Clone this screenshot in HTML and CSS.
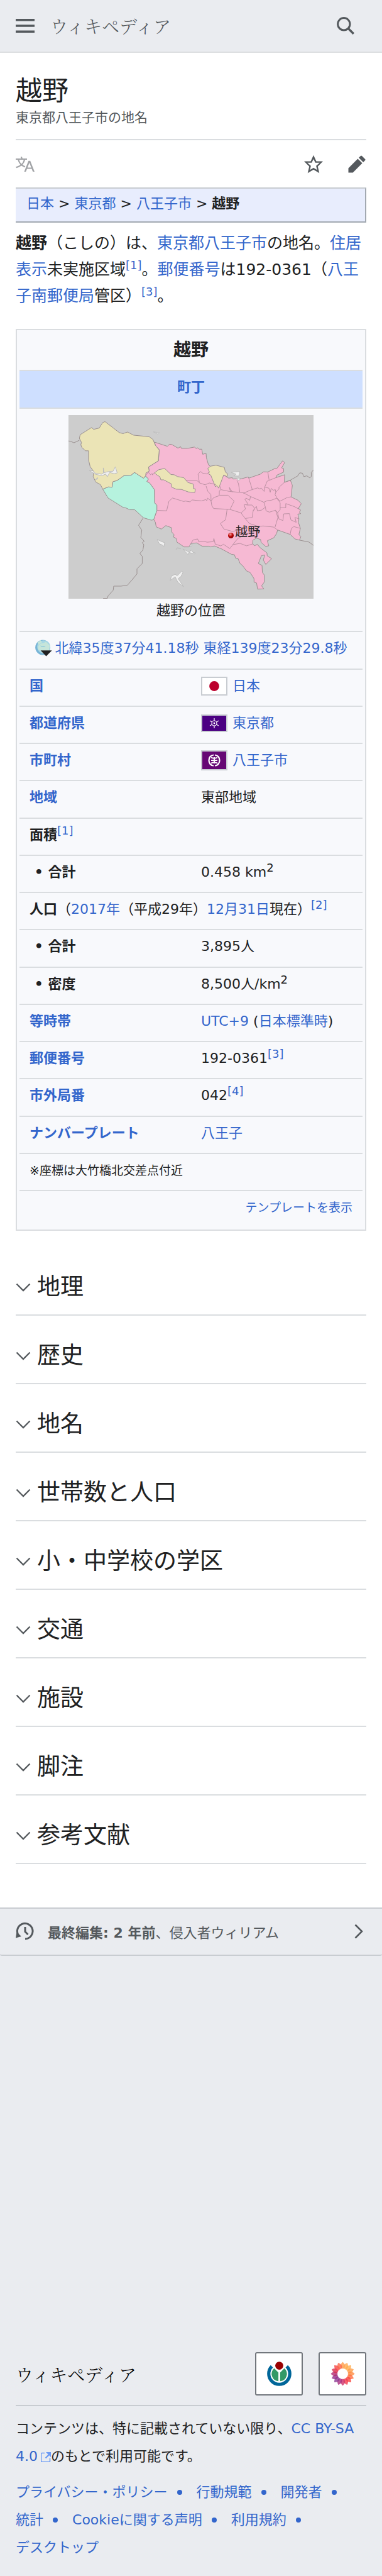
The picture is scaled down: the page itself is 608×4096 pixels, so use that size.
FILE: index.html
```
<!DOCTYPE html>
<html lang="ja">
<head>
<meta charset="utf-8">
<meta name="viewport" content="width=device-width, initial-scale=1">
<title>越野 - ウィキペディア</title>
<link rel="stylesheet" href="styles.css">
</head>
<body>
<svg class="defs" aria-hidden="true">
  <symbol id="chevron" viewBox="0 0 24 24"><path d="M1.500 6.500 12 17 22.500 6.500" fill="none" stroke="currentColor" stroke-width="2.300"/></symbol>
</svg>

<header class="site-header">
  <button class="icon-button" type="button" aria-label="メニュー">
    <svg class="icon" viewBox="0 0 30 30"><path d="M0 4h30v3.500H0zM0 13.300h30v3.500H0zM0 22.500h30V26H0z" fill="currentColor"/></svg>
  </button>
  <a class="wordmark" href="#">ウィキペディア</a>
  <button class="icon-button search" type="button" aria-label="検索">
    <svg class="icon" viewBox="0 0 30 30"><g fill="none" stroke="currentColor"><circle cx="12.300" cy="12.300" r="9.700" stroke-width="3"/><path d="m19 19 8.800 8.800" stroke-width="3.400"/></g></svg>
  </button>
</header>

<main class="page">
  <div class="heading">
    <h1 class="title">越野</h1>
    <p class="subtitle">東京都八王子市の地名</p>
  </div>

  <div class="toolbar">
    <button class="icon-button muted" type="button" aria-label="言語">
      <svg class="icon" viewBox="0 0 20 20"><path d="M20 18h-1.440a.6.600 0 0 1-.4-.120.800.800 0 0 1-.230-.310L17 15h-5l-1 2.540a.8.800 0 0 1-.220.300.600.600 0 0 1-.4.140H9l4.550-11.470h1.890zm-3.530-4.310L14.890 9.500a11.600 11.600 0 0 1-.390-1.240q-.090.370-.190.690l-.190.560-1.580 4.190zm-6.300-1.580a13.400 13.400 0 0 1-2.910-1.410 11.460 11.460 0 0 0 2.810-5.370H12V4H7.310a4 4 0 0 0-.2-.560C6.870 2.790 6.600 2 6.600 2l-1.470.5s.4.890.6 1.500H0v1.330h2.150A11.230 11.230 0 0 0 5 10.700a17.200 17.200 0 0 1-5 2.100q.560.820.870 1.380a23.300 23.300 0 0 0 5.220-2.510 15.600 15.600 0 0 0 3.560 1.770zM3.630 5.330h4.910a8.100 8.100 0 0 1-2.450 4.450 9.100 9.100 0 0 1-2.460-4.450" fill="currentColor"/></svg>
    </button>
    <span class="toolbar-end">
      <button class="icon-button" type="button" aria-label="ウォッチ">
        <svg class="icon" viewBox="0 0 20 20"><path d="M20 7h-7L10 .5 7 7H0l5.460 5.470-1.640 7 6.180-3.700 6.180 3.730-1.630-7zm-10 6.900-3.760 2.270 1-4.280L3.500 8.500h4.610L10 4.600l1.900 3.900h4.600l-3.730 3.400 1 4.280z" fill="currentColor"/></svg>
      </button>
      <button class="icon-button" type="button" aria-label="編集">
        <svg class="icon" viewBox="0 0 20 20"><path d="m16.770 8 1.940-2a1 1 0 0 0 0-1.410l-3.340-3.300a1 1 0 0 0-1.410 0L12 3.230zM1 14.250V19h4.750l9.960-9.960-4.750-4.750z" fill="currentColor"/></svg>
      </button>
    </span>
  </div>

  <nav class="breadcrumb"><a href="#">日本</a> &gt; <a href="#">東京都</a> &gt; <a href="#">八王子市</a> &gt; <b>越野</b></nav>

  <p class="lead"><b>越野</b>（こしの）は、<a href="#">東京都</a><a href="#">八王子市</a>の地名。<a href="#">住居表示</a>未実施区域<sup><a href="#">[1]</a></sup>。<a href="#">郵便番号</a>は192-0361（<a href="#">八王子南郵便局</a>管区）<sup><a href="#">[3]</a></sup>。</p>

  <div class="infobox">
    <table class="facts">
      <tbody>
        <tr><th class="facts-title" colspan="2">越野</th></tr>
        <tr><th class="facts-kind" colspan="2"><a href="#">町丁</a></th></tr>
        <tr><td class="facts-map" colspan="2">
          <div class="map">
            <svg class="map-art" viewBox="20 24 1528 1517" preserveAspectRatio="none" role="img" aria-label="越野の位置">
              <rect x="20" y="24" width="1528" height="1517" fill="#cdcdcd"/>
              <g class="river">
                <path d="M20 238 32 240 54 253 88 232M487 872 457 934 477 975 471 1035 493 1067 480 1078 490 1095 484 1139 465 1167 480 1191V1250L447 1295V1337L388 1429 348 1437H302L299 1470 267 1518 262 1539H236"/>
                <path d="M1366 580 1402 563 1450 526 1462 501 1479 504 1487 532 1507 526 1524 542 1534 532V498L1548 477M1460 1057 1520 1073 1548 1101"/>
              </g>
              <path class="pink" d="M557 248 637 282 650 265 664 267 703 297 719 285 724 299H763L806 288 815 300 826 295 836 306H851L857 348 878 340 880 376 893 435 906 449 990 520 1019 545 1042 541 1046 552 1099 550 1141 535 1144 545 1216 512 1236 493 1263 494 1308 465 1320 464 1355 402 1368 417 1349 460 1362 466V495L1320 520 1313 541 1368 517 1366 580 1404 563 1416 604 1408 700 1450 727 1472 756 1454 794 1467 808 1460 827 1469 838 1450 842 1457 881 1454 910 1466 960 1457 1010 1469 1030 1460 1057 1432 1047 1402 1010 1324 973 1318 1002 1300 1038 1260 1062 1269 1104 1250 1109 1221 1075 1218 1052 1192 1040 1170 1058 1168 1085 1180 1104 1198 1091 1213 1117 1258 1163 1259 1186 1287 1210 1250 1258 1235 1221 1244 1180 1223 1186 1204 1250 1227 1266 1229 1324 1241 1345V1404L1224 1434 1238 1460 1199 1462 1193 1411 1177 1404V1375L1153 1325 1129 1310 1105 1266 1091 1252 1076 1206H1062L1055 1178 1036 1174 972 1128 929 1105 908 1113 896 1107H853L820 1080 784 1084 771 1113H741L697 1074 693 1045 674 1030 679 1014 664 990 662 954 627 937 599 966 567 947 562 910 551 886 571 812V767L557 750 556 640 527 587 508 576 517 553 501 527 503 501 523 487 519 453 581 402 586 310 562 274Z"/>
              <path class="cream" d="M88 216 93 186 164 127 177 142 212 131 233 86 248 78 337 169 360 177 388 164 426 190 524 203 547 226 562 274 586 312 580 402 519 453 523 487 503 503 501 525 488 546 431 498 411 521 368 523 323 565 297 575 292 620 269 618 234 636 219 598 190 577 174 532 177 490 155 449 145 393V319H126L103 290 97 269 101 250Z"/>
              <path class="cream" d="M555 503 583 475 620 465 659 515 679 517 700 532 739 541 765 581 797 593 799 631 811 634 808 663 767 659 725 638 691 636 662 618V593L614 559H596L590 534Z"/>
              <path class="cream" d="M888 466 906 446 940 438 992 456 998 494 1014 511 1008 532 988 518 962 610 957 628 945 607 936 616 907 520 895 512 898 490Z"/>
              <path class="mint" d="M234 636 269 618 292 620 297 575 323 565 368 523 411 521 431 498 488 546 501 529 519 553 508 572 527 587 556 640 557 750 571 767V812L551 889 536 892 487 872 433 806H402L380 792 360 786 266 708Z"/>
              <g class="border">
                <path d="M503 515 514 508 519 497 532 517 540 507 545 519 550 502M753 563H820L838 585 872 600 898 585 940 598M836 582 828 512 843 490 858 505 885 511 893 497M878 610 889 655 908 680 909 734 914 772 925 796 1026 803 1096 832 1122 879 1149 920 1204 944 1234 940 1298 949 1310 960 1324 973M571 811 632 815 646 737 669 709 739 738 749 734 778 741 791 725 849 733 877 722 882 731 888 710 909 734 925 706 960 690 961 650 970 640 962 604"/>
                <path d="M970 640 1025 655 1110 665 1155 697 1238 744 1260 731 1284 728 1320 710 1340 735 1385 704 1408 700M1030 655 1023 622 1042 660M1070 564 1080 590 1088 658M1144 545 1167 643M1110 670 1153 645 1200 625 1213 634 1222 627 1240 655 1242 618 1270 628 1278 662 1284 630 1297 645 1310 640 1313 662 1308 680 1328 728M1366 580 1332 622 1333 634 1313 662M1244 618 1259 570 1313 541M1271 560 1263 494M962 686H1014L1053 734 1028 802M1009 803 1000 888 967 920 990 966 1045 986 1096 965M1155 697 1150 728 1128 710 1120 720 1140 760 1115 766 1124 800 1096 832M1130 767H1165L1182 796 1171 820 1166 870 1122 878M1170 815 1192 778 1198 815 1224 809 1248 785 1238 744M1248 785 1252 815 1273 826 1311 810 1324 830 1340 805V750L1325 720M1340 790 1375 790V755L1430 781 1467 808M1311 810 1326 870 1308 950M1324 830 1333 883 1357 895 1362 840 1398 838 1407 890 1440 910 1432 870 1457 881M1402 1010 1410 960 1425 945 1466 960"/>
                <path d="M784 1084 797 1056 825 1047 832 1070 865 1067 884 1074 922 1070 927 1043 935 1090 970 1105 986 1091 1026 1127 1045 1094 1075 1045 1130 1005M1045 1094 1090 1084 1130 1104 1170 1088"/>
              </g>
              <g class="lake">
                <path d="M150 482 172 484 188 505 226 512 238 503 237 460 242 500 270 490 298 488 312 451 324 502 304 508 277 498 262 534 252 511 229 525 189 513Z"/>
                <path d="M550 163 587 170 577 181ZM1034 497 1089 490 1082 528 1050 526 1065 512ZM1068 550 1085 542 1090 558 1078 562ZM573 1051 600 1069 620 1078 615 1110 603 1096 587 1088ZM690 1135 698 1120 720 1126 700 1124ZM733 1130 774 1157 785 1139 795 1157 811 1163 808 1171 771 1159 765 1176ZM654 1390 662 1355 685 1338 698 1352 725 1315 735 1320 721 1358 704 1375 738 1443 702 1405 685 1360ZM777 1101 792 1094 784 1110ZM188 558 200 540 203 550Z"/>
              </g>
            </svg>
            <span class="map-pin"></span>
            <a class="map-label" href="#">越野</a>
          </div>
          <div class="map-caption">越野の位置</div>
        </td></tr>
        <tr><td class="coords" colspan="2"><svg class="globe" viewBox="0 0 156 156" aria-hidden="true"><circle cx="70" cy="72" r="69" fill="#78b5d7"/><circle cx="78" cy="67" r="60" fill="#a7d7e5"/><path d="M28 60C40 38 60 30 76 32l24-12 35 35-8 50-58 22-18-24-24-10zM20 28l30-22 12 18-30 22z" fill="#c6e5da"/><path d="m46 57 38 3 12 10-40-6z" fill="#83c3dc"/><path d="M50 99h104l-53 54z" fill="#202122"/></svg><a href="#">北緯35度37分41.18秒 東経139度23分29.8秒</a></td></tr>
        <tr><th scope="row"><a href="#">国</a></th><td><span class="with-flag"><svg class="flag" viewBox="0 0 38 26"><path fill="#fff" d="M0 0h38v26H0z"/><circle cx="19" cy="13" r="7.900" fill="#bc002d"/></svg><a href="#">日本</a></span></td></tr>
        <tr><th scope="row"><a href="#">都道府県</a></th><td><span class="with-flag"><svg class="flag" viewBox="0 0 38 24"><path fill="#4b0082" d="M0 0h38v24H0z"/><g fill="none" stroke="#fff" stroke-width="1.200"><circle cx="19" cy="12" r="4"/><path d="M19 4v4M19 16v4M12 8l3.500 2M22.500 14l3.500 2M12 16l3.500-2M22.500 10l3.500-2"/></g><circle cx="19" cy="12" r="1.400" fill="#fff"/></svg><a href="#">東京都</a></span></td></tr>
        <tr><th scope="row"><a href="#">市町村</a></th><td><span class="with-flag"><svg class="flag" viewBox="0 0 38 28"><path fill="#660874" d="M0 0h38v28H0z"/><g fill="none" stroke="#fff" stroke-width="2.200"><path d="M18 5.500C8 6 8 22 18 22.500M20 5.500C30 6 30 22 20 22.500"/><path d="M14 14h10M19 9v10M14 9.500c3 1.500 7 1.500 10 0M14 18.500c3-1.500 7-1.500 10 0" stroke-width="1.900"/></g></svg><a href="#">八王子市</a></span></td></tr>
        <tr><th scope="row"><a href="#">地域</a></th><td>東部地域</td></tr>
        <tr><th scope="row" colspan="2">面積<sup><a href="#">[1]</a></sup></th></tr>
        <tr><th scope="row">&nbsp;•&nbsp;合計</th><td>0.458 km<sup>2</sup></td></tr>
        <tr><td colspan="2"><b>人口</b>（<a href="#">2017年</a>（平成29年）<a href="#">12月31日</a>現在）<sup><a href="#">[2]</a></sup></td></tr>
        <tr><th scope="row">&nbsp;•&nbsp;合計</th><td>3,895人</td></tr>
        <tr><th scope="row">&nbsp;•&nbsp;密度</th><td>8,500人/km<sup>2</sup></td></tr>
        <tr><th scope="row"><a href="#">等時帯</a></th><td><a href="#">UTC+9</a> (<a href="#">日本標準時</a>)</td></tr>
        <tr><th scope="row"><a href="#">郵便番号</a></th><td>192-0361<sup><a href="#">[3]</a></sup></td></tr>
        <tr><th scope="row"><a href="#">市外局番</a></th><td>042<sup><a href="#">[4]</a></sup></td></tr>
        <tr><th scope="row"><a href="#">ナンバープレート</a></th><td><a href="#">八王子</a></td></tr>
        <tr><td class="small" colspan="2">※座標は大竹橋北交差点付近</td></tr>
        <tr><td class="small end" colspan="2"><a href="#">テンプレートを表示</a></td></tr>
      </tbody>
    </table>
  </div>

  <div class="sections">
    <h2 class="section"><button class="section-toggle" type="button"><svg class="chevron"><use href="#chevron"/></svg>地理</button></h2>
    <h2 class="section"><button class="section-toggle" type="button"><svg class="chevron"><use href="#chevron"/></svg>歴史</button></h2>
    <h2 class="section"><button class="section-toggle" type="button"><svg class="chevron"><use href="#chevron"/></svg>地名</button></h2>
    <h2 class="section"><button class="section-toggle" type="button"><svg class="chevron"><use href="#chevron"/></svg>世帯数と人口</button></h2>
    <h2 class="section"><button class="section-toggle" type="button"><svg class="chevron"><use href="#chevron"/></svg>小・中学校の学区</button></h2>
    <h2 class="section"><button class="section-toggle" type="button"><svg class="chevron"><use href="#chevron"/></svg>交通</button></h2>
    <h2 class="section"><button class="section-toggle" type="button"><svg class="chevron"><use href="#chevron"/></svg>施設</button></h2>
    <h2 class="section"><button class="section-toggle" type="button"><svg class="chevron"><use href="#chevron"/></svg>脚注</button></h2>
    <h2 class="section"><button class="section-toggle" type="button"><svg class="chevron"><use href="#chevron"/></svg>参考文献</button></h2>
  </div>
</main>

<footer>
  <a class="last-modified" href="#">
    <svg class="icon" viewBox="0 0 30 30" aria-hidden="true"><g fill="none" stroke="currentColor" stroke-width="3"><path d="M4.500 21.500A12.300 12.300 0 1 1 15 27"/><path d="M15 8v7.500l4.500 4.500"/></g><path d="M0 25.500 1.500 16l7.500 7z" fill="currentColor"/></svg>
    <span class="last-modified-text"><b>最終編集: 2 年前</b>、侵入者ウィリアム</span>
    <svg class="arrow" viewBox="0 0 24 24" aria-hidden="true"><path d="m6.500 1.500 10.500 10.500L6.500 22.500" fill="none" stroke="currentColor" stroke-width="2.600"/></svg>
  </a>

  <div class="footer-content">
    <div class="footer-brand">
      <span class="wordmark footer-wordmark">ウィキペディア</span>
      <a class="badge" href="#" aria-label="Wikimedia Foundation">
        <svg class="badge-art" viewBox="0 0 226 226"><path d="M44.400 44.400A97 97 0 1 0 181.600 44.400" fill="none" stroke="#069" stroke-width="30"/><path d="m66 62 39 39v80A68 68 0 0 1 66 62zM160 62l-39 39v80a68 68 0 0 0 39-119z" fill="#396"/><circle cx="113" cy="38" r="37" fill="#900"/></svg>
      </a>
      <a class="badge" href="#" aria-label="MediaWiki">
        <svg class="badge-art" viewBox="-113 -113 226 226">
          <defs><path id="petal" d="M0-110C-28-84-26-60-8-48H8C26-60 28-84 0-110z"/></defs>
          <g fill-opacity=".8">
            <use href="#petal" fill="#ff9b4a"/>
            <use href="#petal" fill="#ffa94d" transform="rotate(22.500)"/>
            <use href="#petal" fill="#ffae4d" transform="rotate(45)"/>
            <use href="#petal" fill="#ff9d4a" transform="rotate(67.500)"/>
            <use href="#petal" fill="#ff8c42" transform="rotate(90)"/>
            <use href="#petal" fill="#ff6e40" transform="rotate(112.500)"/>
            <use href="#petal" fill="#f9453f" transform="rotate(135)"/>
            <use href="#petal" fill="#f43b4c" transform="rotate(157.500)"/>
            <use href="#petal" fill="#d0336a" transform="rotate(180)"/>
            <use href="#petal" fill="#a92e7e" transform="rotate(202.500)"/>
            <use href="#petal" fill="#8c3a93" transform="rotate(225)"/>
            <use href="#petal" fill="#932e88" transform="rotate(247.500)"/>
            <use href="#petal" fill="#b22a70" transform="rotate(270)"/>
            <use href="#petal" fill="#d9304f" transform="rotate(292.500)"/>
            <use href="#petal" fill="#f64545" transform="rotate(315)"/>
            <use href="#petal" fill="#fb6747" transform="rotate(337.500)"/>
          </g>
        </svg>
      </a>
    </div>
    <p class="license">コンテンツは、特に記載されていない限り、<a href="#">CC BY-SA 4.0<svg class="external" viewBox="0 0 16 16" aria-hidden="true"><path d="M6 1.500H1.500a1 1 0 0 0-1 1v12a1 1 0 0 0 1 1h12a1 1 0 0 0 1-1V9.500" fill="none" stroke="#6d9bf5" stroke-width="1.600"/><path d="M8 0h8v8l-2.700-2.700-5 5-1.600-1.600 5-5z" fill="#6d9bf5"/></svg></a>のもとで利用可能です。</p>
    <ul class="places">
      <li><a href="#">プライバシー・ポリシー</a></li>
      <li><a href="#">行動規範</a></li>
      <li><a href="#">開発者</a></li>
      <li><a href="#">統計</a></li>
      <li><a href="#">Cookieに関する声明</a></li>
      <li><a href="#">利用規約</a></li>
      <li><a href="#">デスクトップ</a></li>
    </ul>
  </div>
</footer>
</body>
</html>
```

FILE: styles.css
```
* {
  box-sizing: border-box;
}

body {
  margin: 0;
  background: #eaecf0;
  color: #202122;
  font-family: "DejaVu Sans", "Noto Sans CJK JP", sans-serif;
  font-size: 22px;
}

a {
  color: #3366cc;
  text-decoration: none;
}

button {
  font: inherit;
  color: inherit;
  padding: 0;
  border: 0;
  background: none;
}

h1,
h2,
p,
ul {
  margin: 0;
  padding: 0;
  font-weight: 400;
}

sup {
  font-size: 18px;
  font-weight: 400;
  line-height: 0;
}

.defs {
  display: none;
}

.icon-button {
  display: flex;
  color: #54595d;
}

.icon-button.muted {
  color: #a2a4a7;
}

.icon {
  width: 30px;
  height: 30px;
  flex: none;
}

.site-header {
  display: flex;
  align-items: center;
  height: 84px;
  padding: 0 43px 0 25px;
  border-bottom: 2px solid #dddfe1;
}

.wordmark {
  margin-left: 25px;
  color: #54595d;
  font-family: "Noto Serif CJK JP", "Noto Sans CJK JP", serif;
  font-size: 28px;
  font-weight: 300;
  line-height: 40px;
  white-space: nowrap;
}

.search {
  margin-left: auto;
}

.page {
  padding: 35px 25px 69px;
  background: #fff;
}

.heading {
  padding-bottom: 19px;
  border-bottom: 2px solid #dadde0;
}

.title {
  font-size: 42px;
  line-height: 52px;
}

.subtitle {
  margin-top: 1px;
  color: #54595d;
  font-size: 21px;
  line-height: 30px;
}

.toolbar,
.toolbar-end {
  display: flex;
  align-items: center;
}

.toolbar {
  justify-content: space-between;
  height: 75px;
}

.toolbar-end {
  gap: 39px;
}

.breadcrumb {
  padding: 6px 17px 10px;
  border: 2px solid #a2a9b1;
  border-top-color: #c8ccd1;
  border-left: 0;
  background: #e8edfd;
  line-height: 36px;
}

.lead {
  margin-top: 12px;
  font-size: 25px;
  line-height: 42px;
}

.infobox {
  margin-top: 31px;
  padding: 4px;
  border: 2px solid #dadde0;
  background: #f8f9fc;
}

.facts {
  width: 100%;
  border-spacing: 0;
  table-layout: fixed;
}

.facts th,
.facts td {
  height: 59px;
  padding: 8px 16px;
  border-top: 2px solid #dadde0;
  line-height: 36px;
  text-align: left;
  vertical-align: top;
}

.facts tr:nth-child(4n) th,
.facts tr:nth-child(4n) td {
  height: 60px;
}

.facts .facts-title {
  padding-top: 10px;
  border-top: 0;
  font-size: 28px;
  text-align: center;
}

.facts .facts-kind {
  height: 60px;
  background: #cedfff;
  text-align: center;
}

.facts .facts-map {
  padding: 10px 16px 13px;
  text-align: center;
}

.map {
  position: relative;
  max-width: 390px;
  margin: 0 auto;
}

.map-art {
  display: block;
  width: 100%;
  aspect-ratio: 390 / 292;
}

.map-art path {
  stroke: #9a9090;
  stroke-width: 1px;
  stroke-linejoin: round;
  vector-effect: non-scaling-stroke;
}

.pink {
  fill: #f6b9d3;
}

.cream {
  fill: #ebe4b6;
}

.mint {
  fill: #b6f2de;
}

.river,
.border {
  fill: none;
}

.map-art .border path {
  stroke: #bb91a3;
}

.lake {
  fill: #efefef;
}

.map-art .lake path {
  stroke: #bcbcbc;
}

.map-pin {
  position: absolute;
  left: 65%;
  top: 64%;
  width: 9px;
  height: 9px;
  border-radius: 50%;
  background: radial-gradient(circle at 40% 30%, #f3a0a0, #b00 45%, #400);
}

.map-label {
  position: absolute;
  left: 68%;
  top: 59%;
  color: #202122;
  font-size: 20px;
  line-height: 28px;
}

.map-caption {
  line-height: 38px;
}

.facts .coords {
  text-align: center;
  white-space: nowrap;
}

.globe {
  width: 27px;
  height: 27px;
  margin-right: 5px;
  vertical-align: -6px;
}

.with-flag {
  display: flex;
  align-items: center;
  gap: 8px;
}

.flag {
  width: 42px;
  border: 2px solid #c8ccd1;
}

.facts .small {
  font-size: 19px;
}

.facts .end {
  text-align: right;
}

.sections {
  margin-top: 26px;
}

.section {
  padding: 36px 0 15px;
  border-bottom: 2px solid #dadde0;
  font-size: 37px;
  line-height: 56px;
}

.section-toggle {
  display: flex;
  align-items: center;
  gap: 10px;
  width: 100%;
  text-align: left;
}

.chevron {
  width: 24px;
  height: 24px;
  color: #54595d;
}

.last-modified {
  display: flex;
  align-items: center;
  gap: 21px;
  height: 77px;
  padding: 0 25px 2px;
  border: solid #c8ccd1;
  border-width: 2px 0;
  border-radius: 0 0 3px 3px;
  color: #54595d;
}

.last-modified-text {
  flex: 1;
}

.arrow {
  width: 24px;
  height: 24px;
}

.footer-content {
  padding: 630px 25px 24px;
}

.footer-brand {
  display: flex;
  align-items: center;
  gap: 25px;
  padding-bottom: 15px;
  border-bottom: 2px solid #c8ccd1;
}

.footer-wordmark {
  margin: 0 auto 0 0;
  color: #000;
}

.badge {
  display: flex;
  align-items: center;
  justify-content: center;
  width: 76px;
  height: 69px;
  border: 2px solid #72777d;
  border-radius: 3px;
  background: #fff;
}

.badge-art {
  width: 39px;
  height: 39px;
}

.license {
  margin-top: 14px;
  line-height: 44px;
}

.external {
  width: 16px;
  height: 16px;
  margin-left: 5px;
  vertical-align: -2px;
}

.places {
  display: flex;
  flex-wrap: wrap;
  margin-top: 13px;
  list-style: none;
  line-height: 44px;
}

.places li {
  display: flex;
  align-items: center;
}

.places li:not(:last-child)::after {
  content: "";
  width: 8px;
  height: 8px;
  margin: 0 23px 0 15px;
  border-radius: 50%;
  background: #3366cc;
}
```
